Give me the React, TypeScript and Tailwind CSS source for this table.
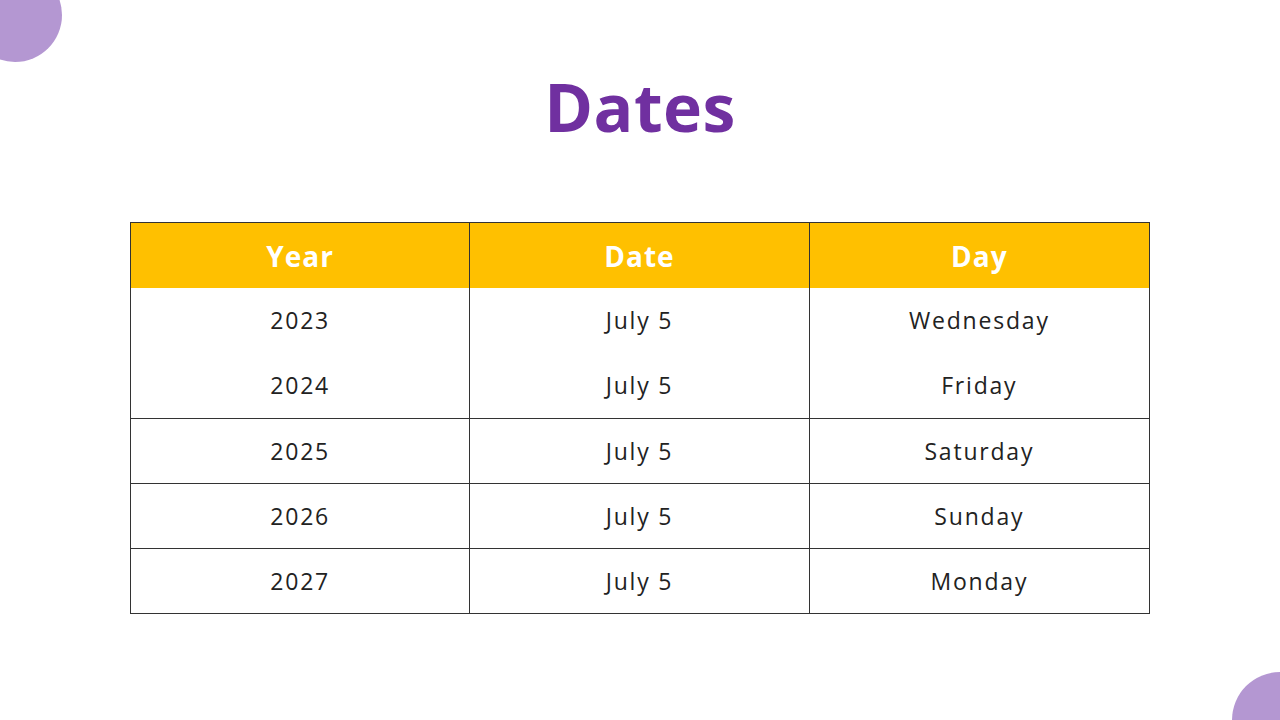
import React from "react";

const rows = [
  ["2023", "July 5", "Wednesday"],
  ["2024", "July 5", "Friday"],
  ["2025", "July 5", "Saturday"],
  ["2026", "July 5", "Sunday"],
  ["2027", "July 5", "Monday"],
];

export default function App() {
  return (
    <div
      className="relative w-[1280px] h-[720px] bg-white overflow-hidden flex flex-col items-center"
      style={{ fontFamily: '"Open Sans", "Liberation Sans", sans-serif' }}
    >
      <div className="absolute -left-[32px] -top-[32px] w-[94px] h-[94px] rounded-full bg-[#b497d2]" />
      <div className="absolute -right-[48px] -bottom-[48px] w-[96px] h-[96px] rounded-full bg-[#b497d2]" />

      <h1 className="mt-[64px] h-[84px] leading-[84px] text-[66px] font-bold text-[#7030a0] tracking-[0.5px]">
        Dates
      </h1>

      <div className="mt-[74px] w-[1020px] border border-[#333] flex flex-col">
        <div className="grid grid-cols-3 h-[65px] bg-[#ffc000]">
          {["Year", "Date", "Day"].map((h, i) => (
            <div
              key={h}
              className={`flex items-center justify-center text-white font-bold text-[28px] tracking-[1px] ${i < 2 ? "border-r border-[#333]" : ""}`}
            >
              {h}
            </div>
          ))}
        </div>
        {rows.map((r, ri) => (
          <div
            key={ri}
            className={`grid grid-cols-3 h-[65px] ${ri > 1 ? "border-t border-[#333]" : ""}`}
          >
            {r.map((c, i) => (
              <div
                key={i}
                className={`flex items-center justify-center text-[#222] text-[23px] tracking-[1.8px] ${i < 2 ? "border-r border-[#333]" : ""}`}
              >
                {c}
              </div>
            ))}
          </div>
        ))}
      </div>
    </div>
  );
}
